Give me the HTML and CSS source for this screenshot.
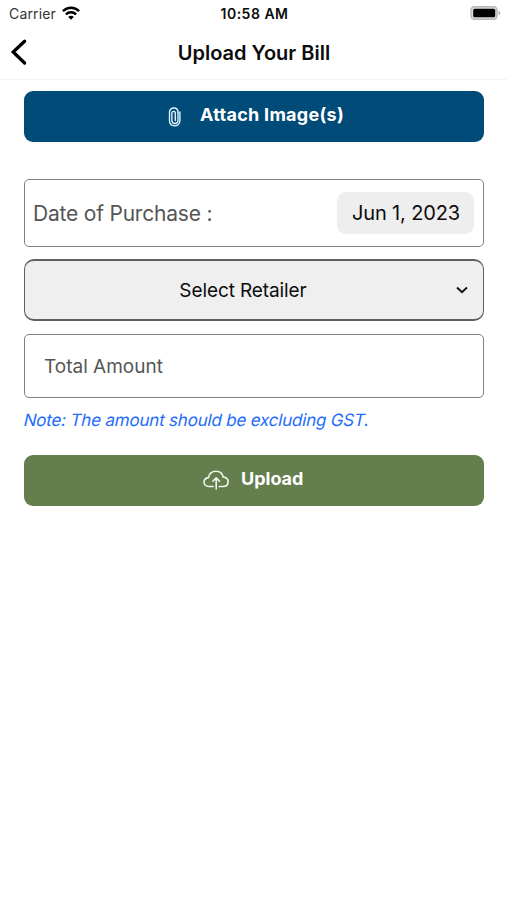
FILE: index.html
```html
<!DOCTYPE html>
<html lang="en">
<head>
<meta charset="utf-8">
<title>Upload Your Bill</title>
<link rel="stylesheet" href="styles.css">
</head>
<body>
<header class="top">
  <div class="status">
    <div class="carrier"><span class="carrier-name">Carrier</span>
      <svg class="wifi" viewBox="0 0 18 14" width="18" height="14" fill="none" stroke="#000" stroke-width="2.5"><path d="M.9 5.1C5.4.5 12.6.5 17.1 5.1"/><path d="M3.9 8.3c2.9-2.8 7.3-2.8 10.2 0"/><path d="M9 13.7 6.2 10.9c1.5-1.5 4.1-1.5 5.6 0z" fill="#000" stroke="none"/></svg>
    </div>
    <time class="time">10:58 AM</time>
    <svg class="battery" viewBox="0 0 31 14" width="31" height="14"><rect x="1" y=".8" width="26" height="12.4" rx="3.4" fill="#ddd" stroke="#b8b8b8" stroke-width="1.5"/><rect x="3.2" y="2.7" width="22" height="8.6" rx="1.5"/><path d="M28.6 4.8c2.2.8 2.2 3.6 0 4.4z" fill="#aaa"/></svg>
  </div>
  <div class="nav">
    <svg class="back" viewBox="0 0 18 28" width="18" height="28" fill="none" stroke="#000" stroke-width="3.3" stroke-linecap="round"><path d="M14.6 3.2 3.2 14l11.4 11"/></svg>
    <h1 class="title">Upload Your Bill</h1>
  </div>
</header>
<main class="form">
  <button class="button attach">
    <svg class="clip" viewBox="0 0 14 20" width="14" height="20" fill="none" stroke="#e4f4ff" stroke-width="1.35" stroke-linecap="round"><path d="M10 5.2C10 2.5 8.5 1 6 1S1.5 2.6 1.5 5.2v8.6c0 3 2 5 5 5s5.400-2 5.400-5V4.900"/><path d="M10 5.200v8.300c0 1.900-1.300 3-3.100 3s-3-1.100-3-3V6.300c0-1.200.7-1.900 1.700-1.900s1.700.7 1.700 1.900v7.200"/></svg>
    <span class="label">Attach Image(s)</span>
  </button>
  <div class="field date"><span class="date-label">Date of Purchase :</span><span class="chip"><span class="chip-text">Jun 1, 2023</span></span></div>
  <div class="select"><span class="select-text">Select Retailer</span>
    <svg class="chevron" viewBox="0 0 12 8" width="12" height="8" fill="none" stroke="#111" stroke-width="1.9"><path d="m1 1.500 5 4.700 5-4.700"/></svg>
  </div>
  <div class="field total"><span class="total-text">Total Amount</span></div>
  <p class="note"><span class="note-text">Note: The amount should be excluding GST.</span></p>
  <button class="button upload">
    <svg class="cloud" viewBox="0 0 26 20" width="26" height="20" fill="none" stroke="#eff9e9" stroke-width="1.6" stroke-linecap="round" stroke-linejoin="round"><path d="M10.200 16.500H6C3 16.500 1 14.600 1 12.100c0-2.400 1.700-4.100 4.400-4.500C6.200 3.600 9 1.200 12.800 1.200c3.900 0 6.700 2.300 7.400 5.800 2.900.3 4.900 2.100 4.900 4.800 0 2.800-2 4.700-5 4.700h-3.900"/><path d="M13.200 19V8.200M9.900 11.300l3.300-3.400 3.300 3.400"/></svg>
    <span class="label">Upload</span>
  </button>
</main>
</body>
</html>
```
FILE: styles.css
```css
* { box-sizing: border-box; }
body { margin: 0; background: #fff; color: #0c0c0c; font-family: Inter, "Liberation Sans", sans-serif; }
svg { display: block; flex: none; }
span, time, h1 { white-space: nowrap; }
.top { height: 80px; border-bottom: 1px solid #f3f3f3; }
.status { height: 27px; display: grid; grid-template-columns: 1fr auto 1fr; align-items: center; padding: 0 6px 0 9px; }
.carrier { display: flex; align-items: center; gap: 6px; font-size: 14px; color: #333; }
.carrier-name { letter-spacing: .15px; }
.wifi { margin-top: -2px; }
.time { font-size: 14px; font-weight: 600; letter-spacing: .5px; margin-right: 1px; }
.battery { justify-self: end; margin-top: -1px; }
.nav { height: 50px; display: grid; grid-template-columns: 30px 1fr 30px; align-items: center; padding: 0 10px; }
.title { margin: 1px 0 0 1px; font-size: 20px; font-weight: 600; text-align: center; }
.form { padding: 11px 23px 0 24px; display: flex; flex-direction: column; }
.button { height: 51px; border: 0; border-radius: 9px; color: #fff; display: flex; align-items: center; padding: 0; font: 700 18px/24px Inter, "Liberation Sans", sans-serif; }
.attach { background: #004b78; padding-left: 144px; gap: 18px; letter-spacing: .28px; }
.upload { background: #647e4e; padding-left: 179px; gap: 12px; margin-top: 24px; }
.cloud { margin-top: -1px; }
.button .label { margin-bottom: 4px; }
.field { border: 1px solid #808080; border-radius: 5px; display: flex; align-items: center; }
.date { height: 68px; margin-top: 37px; padding: 0 9px; justify-content: space-between; }
.date-label { font-size: 21px; color: #555; letter-spacing: -.2px; margin-left: -1px; }
.chip { width: 137px; height: 42px; background: #eee; border-radius: 9px; display: flex; align-items: center; justify-content: center; font-size: 20px; letter-spacing: -.15px; padding-left: 1px; }
.select { height: 62px; margin-top: 12px; border: solid #606060; border-width: 2px 1px; border-radius: 10px; background: #efefef; display: grid; grid-template-columns: 1fr 40px; align-items: center; font-size: 19px; letter-spacing: -.1px; }
.select-text { text-align: center; padding-right: 1px; padding-left: 19px; }
.chevron { justify-self: start; margin-left: 13px; }
.total { height: 64px; margin-top: 13px; padding: 1px 0 0 19px; font-size: 19px; color: #555; }
.note { margin: 11px 0 0; font-size: 17px; line-height: 22px; color: #1f6dfa; letter-spacing: -.2px; }
.note-text { display: inline-block; transform: skewX(-12deg); }
```
